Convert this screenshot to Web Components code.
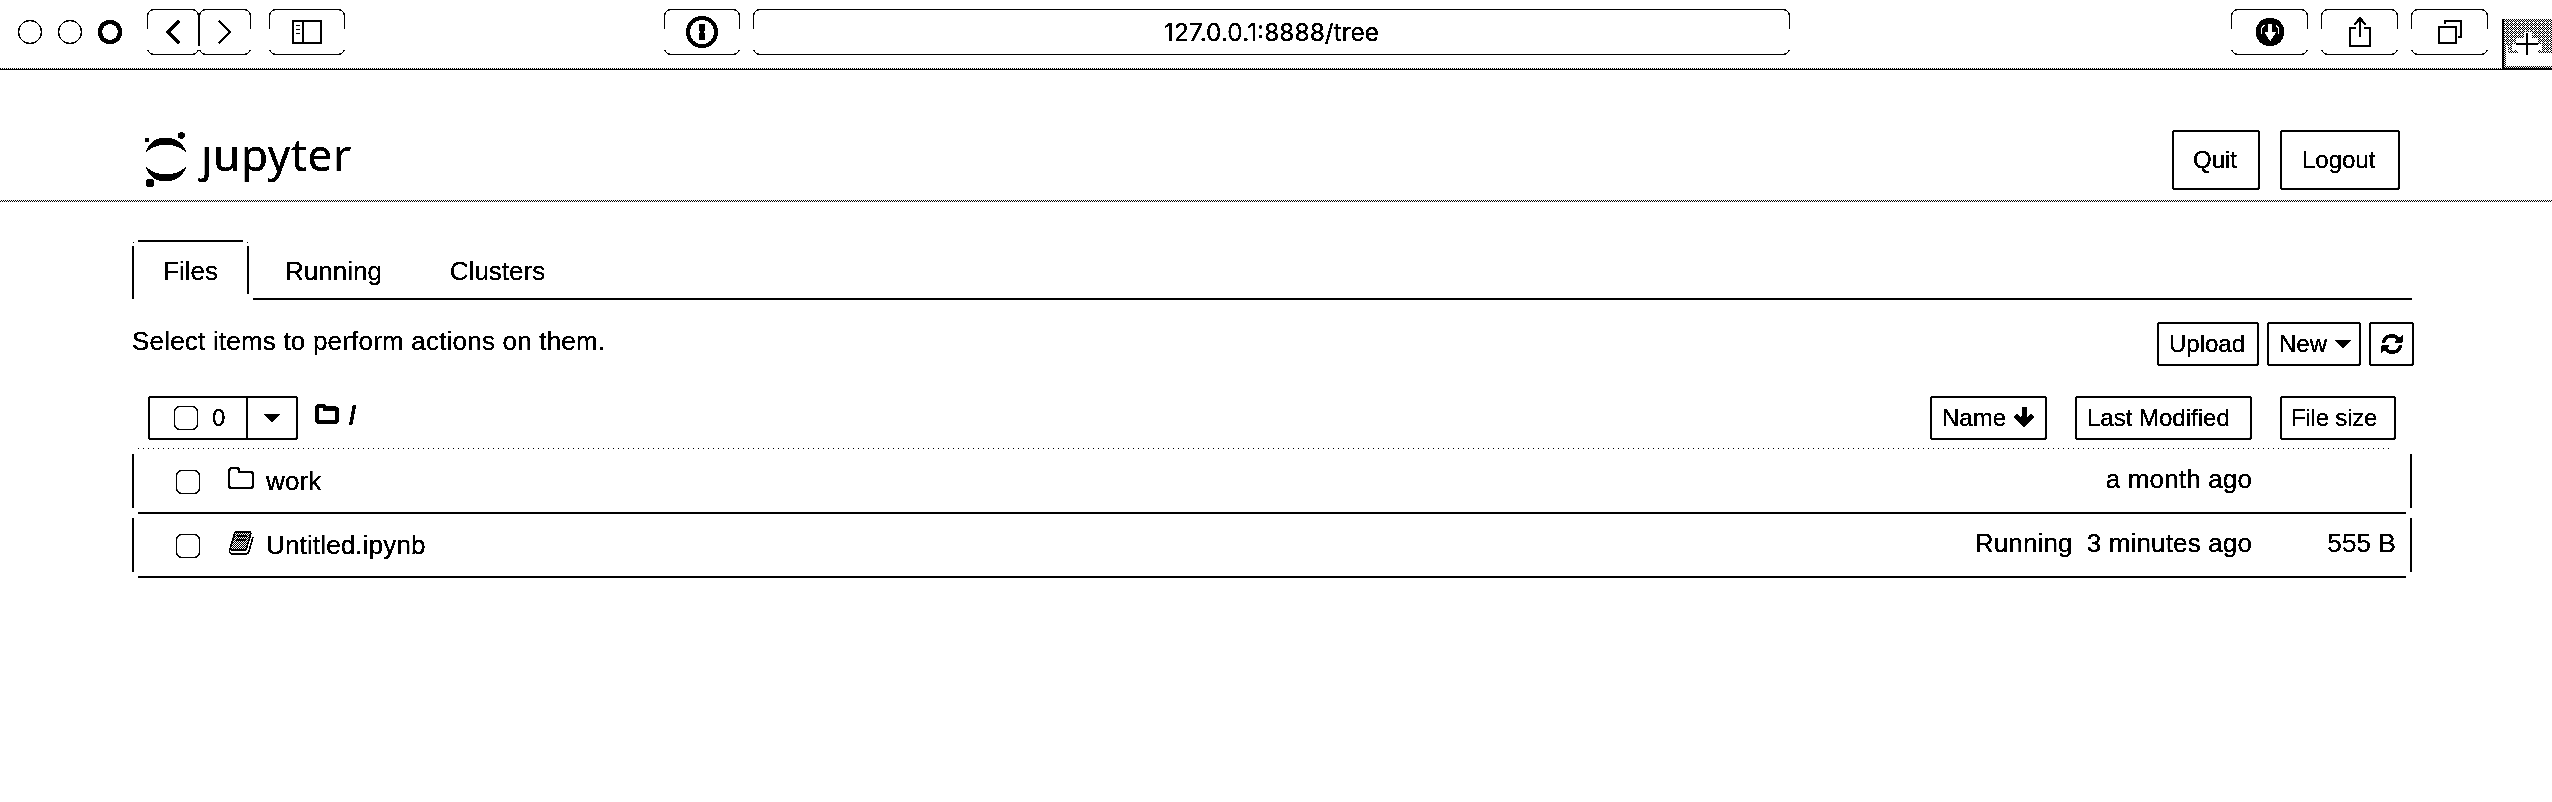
<!DOCTYPE html>
<html lang="en">
<head>
<meta charset="utf-8">
<title>Home</title>
<style>
html,body{margin:0;background:#fff;color:#000}
body{width:2552px;height:802px;overflow:hidden;font-family:"Liberation Sans",Arial,sans-serif;font-size:26px}
notebook-app{filter:url(#onebit)}
.defs{position:absolute;width:0;height:0}
</style>
</head>
<body>
<svg class="defs" aria-hidden="true"><filter id="onebit" x="0" y="0" width="100%" height="100%" color-interpolation-filters="sRGB"><feComponentTransfer><feFuncR type="linear" slope="20" intercept="-14"/><feFuncG type="linear" slope="20" intercept="-14"/><feFuncB type="linear" slope="20" intercept="-14"/></feComponentTransfer></filter></svg>
<notebook-app></notebook-app>
<script>
const define=(name,html)=>{
  const t=document.createElement('template');t.innerHTML=html;
  customElements.define(name,class extends HTMLElement{
    constructor(){super();this.attachShadow({mode:'open'}).append(t.content.cloneNode(true));}
  });
};

const S='fill="none" stroke="#000"';
const ICONS={
  back:[14,24,`<path d="M13 1 2 12 13 23" ${S} stroke-width="2.6"/>`],
  forward:[14,24,`<path d="M1 1 12 12 1 23" ${S} stroke-width="1.8"/>`],
  sidebar:[30,24,`<rect x="1" y="1" width="28" height="22" rx="1" ${S} stroke-width="2"/><path d="M11 1V23M4 5.500H8M4 9.500H8M4 13.500H8" ${S} stroke-width="1.500"/>`],
  onepass:[32,32,`<circle cx="16" cy="16" r="14" ${S} stroke-width="3.600"/><path d="M13 8H19V14L17.5 16 19 18V24H13V18L14.5 16 13 14Z"/>`],
  download:[28,28,`<circle cx="14" cy="14" r="14"/><path d="M12 6H16.5V14H20.5L14.2 23.500 8 14H12Z" fill="#fff"/><path d="M8.500 7 5.500 10.500V16M20 7 22.500 10.500V16" fill="none" stroke="#fff" stroke-width="1.700"/>`],
  share:[22,30,`<path d="M7 11H1V29H21V11H15M11 20V2M5.500 7.500 11 1.500 16.500 7.500" ${S} stroke-width="2"/>`],
  windows:[24,24,`<rect x="1" y="7" width="17" height="16" rx="1" ${S} stroke-width="2"/><path d="M7 4V1H23V17H20" ${S} stroke-width="2"/>`],
  plus:[22,22,`<path d="M11 0V22M0 11H22" ${S} stroke-width="2"/>`],
  caret:[16,8,`<path d="M0 0H16L8 8Z"/>`],
  folder:[26,22,`<path d="M1 4.500Q1 1 4 1H8.500Q11 1 11 4V5H22Q25 5 25 8V18Q25 21 22 21H4Q1 21 1 18Z" ${S} stroke-width="2"/>`],
  folderbold:[24,20,`<path d="M2 4Q2 2 4 2H8Q10 2 10 4.500H20Q22 4.500 22 7V16Q22 18 20 18H4Q2 18 2 16Z" ${S} stroke-width="3.800"/>`],
  book:[26,24,`<path d="M7 1H23L19 19H3Z" fill="url(#d)" shape-rendering="crispEdges"/><path d="M7 1H23M9 5H19M8 9H18" ${S} stroke-width="1.500"/><path d="M7 1 2 18Q0 22 4 23H18Q20 23 21 20L25 6M3 19H18L23 2" ${S} stroke-width="1.200"/><defs><pattern id="d" width="2" height="2" patternUnits="userSpaceOnUse"><path d="M0 0H1V1H0ZM1 1H2V2H1Z"/></pattern></defs>`],
  refresh:[22,20,`<path d="M2.500 8.500C4 1 13 0 17.500 5M19.500 11.500C18 19 9 20 4.500 15" ${S} stroke-width="3.200"/><path d="M21.500 1V8.500H13.500ZM.5 19V11.500H8.500Z"/>`],
  down:[20,20,`<path d="M8 0H12.500V10H8Z"/><path d="M1.500 8.500 10 17 18.500 8.500" ${S} stroke-width="4.200"/><path d="M7.500 9H13V16H7.500Z"/>`],
  planet:[42,56,`<path d="M1 20C6 1 35 1 41 20C30 10 12 10 1 20ZM1 35C6 54 35 54 41 35C30 45 12 45 1 35Z"/><rect y="6" width="4" height="4"/><circle cx="36.500" cy="3.500" r="3.300"/><circle cx="5" cy="51" r="4"/>`]
};
customElements.define('ui-icon',class extends HTMLElement{
  constructor(){super();this.attachShadow({mode:'open'});}
  connectedCallback(){
    const [w,h,p]=ICONS[this.getAttribute('name')];
    this.shadowRoot.innerHTML=`<style>:host{display:block;flex:none;width:${w}px;height:${h}px}svg{display:block}</style><svg width="${w}" height="${h}" viewBox="0 0 ${w} ${h}">${p}</svg>`;
  }
});

define('tool-button',`<style>
:host{display:flex;align-items:center;justify-content:center;box-sizing:border-box;width:77px;height:46px;border:1px solid #000;border-radius:7px;position:relative}
:host::before{content:"";position:absolute;left:-1px;right:-1px;top:19px;height:21px;background:#fff}
.in{position:relative;display:flex}
</style><div class="in"><slot></slot></div>`);

define('window-lights',`<style>
:host{display:flex;gap:16px}
i{box-sizing:border-box;width:24px;height:24px;border:1px solid #000;border-radius:50%}
i:last-child{border-width:4px}
</style><i></i><i></i><i></i>`);

define('new-tab',`<style>
:host{display:block;width:50px;height:50px;box-sizing:border-box;border-left:2px solid #000;position:relative}
svg{display:block}
.p{position:absolute;left:12px;top:14px}
</style><svg width="48" height="50" shape-rendering="crispEdges"><defs>
<pattern id="a" width="4" height="4" patternUnits="userSpaceOnUse"><path d="M0 0h1v1h-1zM2 0h1v1h-1zM1 1h1v1h-1zM3 1h1v1h-1zM0 2h1v1h-1zM2 2h1v1h-1zM3 3h1v1h-1z"/></pattern>
<pattern id="b" width="2" height="2" patternUnits="userSpaceOnUse"><path d="M0 0h1v1h-1zM1 1h1v1h-1z"/></pattern></defs>
<path d="M0 0H48V34H34V31H38V25H34V19H28V13H20V19H12V25H8V31H14V34H4V26H0Z" fill="url(#a)"/><path d="M0 26H2V50H0ZM0 47H48V50H0Z" fill="url(#b)"/></svg><ui-icon class="p" name="plus"></ui-icon>`);

define('browser-bar',`<style>
:host{display:flex;box-sizing:border-box;height:70px;padding:9px 0 0 18px;background:repeating-linear-gradient(90deg,#000 0 1px,#fff 1px 2px) 0 68px/100% 1px no-repeat,linear-gradient(#000,#000) 0 69px/100% 1px no-repeat}
window-lights{margin-top:11px}
.nav{display:flex;margin-left:25px}
.nav tool-button{width:52px}
.sep{width:2px;height:32px;margin:5px -1px 0;background:#000;z-index:1}
.side{width:76px;margin-left:18px}
.shield{width:76px;margin-left:319px}
.url{width:1037px;margin-left:13px;font:24.5px Inter,sans-serif}
.right{display:flex;gap:13px;margin-left:441px}
new-tab{margin:10px 0 0 14px}
</style>
<window-lights></window-lights>
<div class="nav"><tool-button><ui-icon name="back"></ui-icon></tool-button><div class="sep"></div><tool-button><ui-icon name="forward"></ui-icon></tool-button></div>
<tool-button class="side"><ui-icon name="sidebar"></ui-icon></tool-button>
<tool-button class="shield"><ui-icon name="onepass"></ui-icon></tool-button>
<tool-button class="url"><span>127.0.0.1:8888/tree</span></tool-button>
<div class="right"><tool-button><ui-icon name="download"></ui-icon></tool-button><tool-button><ui-icon name="share"></ui-icon></tool-button><tool-button><ui-icon name="windows"></ui-icon></tool-button></div>
<new-tab></new-tab>`);

define('jp-button',`<style>
:host{display:flex;align-items:center;box-sizing:border-box;height:44px;border:2px solid #000;border-radius:3px;padding-left:10px;font-size:24px;line-height:28px;white-space:nowrap}
</style><slot></slot>`);

define('jp-header',`<style>
:host{display:flex;box-sizing:border-box;height:132px;padding:60px 152px 0 145px;align-items:flex-start;background:conic-gradient(#000 25%,#fff 0 50%,#000 0 75%,#fff 0) 0 130px/2px 2px repeat-x}
.logo{display:flex;padding-top:2px}
.word{font:44px/60px "Noto Sans",sans-serif;margin:-8px 0 0 14px;letter-spacing:.7px;white-space:nowrap}
.j{display:inline-block;clip-path:inset(21px -10px 0 -10px)}
.acts{display:flex;margin-left:auto;gap:20px}
jp-button{height:60px;padding-left:19px}
.q{width:88px}.l{width:120px;padding-left:20px}
</style><div class="logo"><ui-icon name="planet"></ui-icon><div class="word"><span class="j">j</span>upyter</div></div>
<div class="acts"><jp-button class="q">Quit</jp-button><jp-button class="l">Logout</jp-button></div>`);

define('jp-tabs',`<style>
:host{display:flex;height:60px;line-height:30px}
div{padding:16px 0 0;box-sizing:border-box}
.on{width:117px;padding-left:31px;background:linear-gradient(#000,#000) 6px 0/105px 2px no-repeat,linear-gradient(#000,#000) 0 6px/2px 53px no-repeat,linear-gradient(#000,#000) 115px 6px/2px 48px no-repeat,linear-gradient(#000,#000) 1px 2px/1px 1px no-repeat,linear-gradient(#000,#000) 115px 2px/1px 1px no-repeat}
.rest{flex:1;display:flex;gap:68px;padding-left:36px;background:linear-gradient(#000,#000) 4px 58px/2159px 2px no-repeat}
</style><div class="on">Files</div><div class="rest"><span>Running</span><span>Clusters</span></div>`);

define('check-box',`<style>:host{display:block;flex:none;box-sizing:border-box;width:24px;height:24px;border:1px solid #000;border-radius:6px}</style>`);

define('list-toolbar',`<style>
:host{display:flex;height:74px;align-items:flex-start;padding-top:22px;box-sizing:border-box}
.t{line-height:30px;margin-top:4px;letter-spacing:.2px}
.b{display:flex;margin-left:auto;margin-right:-2px;gap:8px}
.u{width:102px}.n{width:94px}.r{width:45px}
.n ui-icon{margin:0 0 0 8px}
</style><div class="t">Select items to perform actions on them.</div>
<div class="b"><jp-button class="u">Upload</jp-button><jp-button class="n">New<ui-icon name="caret"></ui-icon></jp-button><jp-button class="r"><ui-icon name="refresh"></ui-icon></jp-button></div>`);

define('list-header',`<style>
:host{display:flex;height:76px;box-sizing:border-box;padding:22px 16px 0 16px;align-items:flex-start;background:repeating-linear-gradient(90deg,#000 0 1px,#fff 1px 5px) 6px 74px/2255px 1px no-repeat}
.sel{width:150px;padding:0}
.a{display:flex;align-items:center;width:98px;height:40px;padding-left:24px;box-sizing:border-box;gap:14px;border-right:2px solid #000}
.sel>ui-icon{margin-left:16px}
.crumb{display:flex;gap:10px;margin:8px 0 0 17px;font-weight:bold;line-height:22px}
.cols{display:flex;margin-left:auto;gap:28px}
.n{width:117px}.m{width:177px}.f{width:116px;padding-left:9px;letter-spacing:-.2px}
.n ui-icon{margin-left:8px;margin-top:-2px}
</style><jp-button class="sel"><span class="a"><check-box></check-box><span>0</span></span><ui-icon name="caret"></ui-icon></jp-button>
<div class="crumb"><ui-icon name="folderbold"></ui-icon><span>/</span></div>
<div class="cols"><jp-button class="n">Name<ui-icon name="down"></ui-icon></jp-button><jp-button class="m">Last Modified</jp-button><jp-button class="f">File size</jp-button></div>`);

define('file-row',`<style>
:host{display:flex;box-sizing:border-box;height:64px;padding:15px 16px 0 44px;line-height:30px;letter-spacing:.15px;white-space:nowrap;background:linear-gradient(#000,#000) 6px 62px/2268px 2px no-repeat,linear-gradient(#000,#000) 0 4px/2px 54px no-repeat,linear-gradient(#000,#000) 100% 4px/2px 54px no-repeat}
check-box{margin-top:5px}
.i{width:26px;margin:2px 12px 0 28px}
.name{margin-top:1px}
.state{margin-left:auto;margin-right:14px}
.state,.time,.size{margin-top:-1px}
.size{width:144px;text-align:right}
</style><check-box></check-box><div class="i"><slot name="icon"></slot></div><div class="name"><slot></slot></div><div class="state"><slot name="state"></slot></div><div class="time"><slot name="time"></slot></div><div class="size"><slot name="size"></slot></div>`);

define('notebook-app',`<style>
:host{display:block;width:2552px;height:802px;background:#fff}
main{display:block;padding:38px 140px 0 132px}
</style><browser-bar></browser-bar><jp-header></jp-header>
<main><jp-tabs></jp-tabs><list-toolbar></list-toolbar><list-header></list-header>
<file-row><ui-icon slot="icon" name="folder"></ui-icon>work<span slot="time">a month ago</span></file-row>
<file-row><ui-icon slot="icon" name="book"></ui-icon>Untitled.ipynb<span slot="state">Running</span><span slot="time">3 minutes ago</span><span slot="size">555 B</span></file-row></main>`);
</script>
</body>
</html>
